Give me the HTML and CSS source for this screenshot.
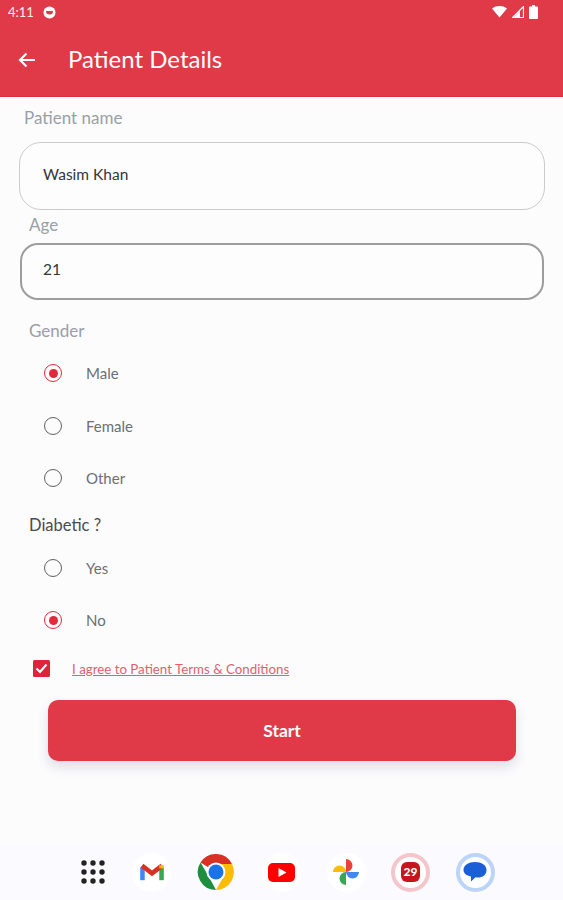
FILE: index.html
```html
<!DOCTYPE html>
<html lang="en">
<head>
    <meta charset="UTF-8">
    <meta name="viewport" content="width=device-width, initial-scale=1.0">
    <title>Patient Details</title>
    <link rel="stylesheet" href="styles.css">
</head>
<body>
    <div class="screen">
        <header class="appbar">
            <div class="statusbar">
                <span class="clock">4:11</span>
                <svg class="status-dot" width="13" height="13" viewBox="0 0 13 13"><circle cx="6.5" cy="6.5" r="6" fill="#fff"/><path d="M3 5h7a3.5 3.5 0 0 1-7 0z" fill="#e03a48"/></svg>
                <span class="status-right">
                    <svg width="15" height="12" viewBox="0 0 15 12"><path d="M0 2.5C4 -.8 11 -.8 15 2.5L7.500 11.500z" fill="#fff"/></svg>
                    <svg width="12" height="12" viewBox="0 0 12 12"><path d="M11.500 .5V11.500H.5z" fill="none" stroke="#fff" stroke-width="1.200"/><path d="M8 4.500V11.500H1.500z" fill="#fff"/></svg>
                    <svg width="9" height="14" viewBox="0 0 9 14"><path d="M3 0h3v1.500h2a1 1 0 0 1 1 1V13a1 1 0 0 1-1 1H1a1 1 0 0 1-1-1V2.500a1 1 0 0 1 1-1h2z" fill="#fff"/></svg>
                </span>
            </div>
            <div class="toolbar">
                <svg class="back" width="18" height="16" viewBox="0 0 18 16"><path d="M17 8H2M8.500 1.500 2 8l6.500 6.500" fill="none" stroke="#fff" stroke-width="2.200"/></svg>
                <h1>Patient Details</h1>
            </div>
        </header>

        <main class="form">
            <div class="field-label first">Patient name</div>
            <div class="input input-name">Wasim Khan</div>
            <div class="field-label age">Age</div>
            <div class="input input-age">21</div>

            <div class="field-label gender">Gender</div>
            <div class="option"><span class="radio on"></span>Male</div>
            <div class="option"><span class="radio"></span>Female</div>
            <div class="option"><span class="radio"></span>Other</div>

            <div class="field-label diabetic">Diabetic ?</div>
            <div class="option"><span class="radio"></span>Yes</div>
            <div class="option"><span class="radio on"></span>No</div>

            <div class="terms">
                <span class="checkbox">
                    <svg width="13" height="11" viewBox="0 0 13 11"><path d="M1.500 5.500 5 9l6.500-7.500" fill="none" stroke="#fff" stroke-width="2.200"/></svg>
                </span>
                <a href="#">I agree to Patient Terms &amp; Conditions</a>
            </div>

            <button class="start">Start</button>
        </main>

        <nav class="dock">
            <span class="dock-item grid-icon">
                <svg width="24" height="24" viewBox="0 0 24 24" fill="#222"><circle cx="3" cy="3" r="2.700"/><circle cx="12" cy="3" r="2.700"/><circle cx="21" cy="3" r="2.700"/><circle cx="3" cy="12" r="2.700"/><circle cx="12" cy="12" r="2.700"/><circle cx="21" cy="12" r="2.700"/><circle cx="3" cy="21" r="2.700"/><circle cx="12" cy="21" r="2.700"/><circle cx="21" cy="21" r="2.700"/></svg>
            </span>
            <span class="dock-item app">
                <svg width="26" height="20" viewBox="0 0 28 22" fill="none">
                    <path d="M3.500 20V6" stroke="#4285f4" stroke-width="5"/>
                    <path d="M24.500 20V6" stroke="#34a853" stroke-width="5"/>
                    <path d="M3 4l11 8.500L25 4" stroke="#d93025" stroke-width="5"/>
                    <path d="M24.500 7V3.500" stroke="#fbbc04" stroke-width="5"/>
                </svg>
            </span>
            <span class="dock-item chrome">
                <svg width="38" height="38" viewBox="0 0 38 38">
                    <path d="M19 19 3.500 9.500A18 18 0 0 1 35 11H19z" fill="#d93025"/>
                    <path d="M19 37A18 18 0 0 1 3.500 9.500L12 24z" fill="#1e8e3e"/>
                    <path d="M19 37 27 23 19 11h16A18 18 0 0 1 19 37z" fill="#fbbc04"/>
                    <circle cx="19" cy="19" r="9.500" fill="#fff"/>
                    <circle cx="19" cy="19" r="7.500" fill="#1a73e8"/>
                </svg>
            </span>
            <span class="dock-item app">
                <svg width="27" height="19" viewBox="0 0 27 19"><rect width="27" height="19" rx="5" fill="#f00"/><path d="M10.500 5v9l8-4.500z" fill="#fff"/></svg>
            </span>
            <span class="dock-item app">
                <svg width="28" height="28" viewBox="0 0 28 28">
                    <path d="M14 14H1a6.500 6.500 0 0 1 13 0z" fill="#fbbc04"/>
                    <path d="M14 14V1a6.500 6.500 0 0 1 0 13z" fill="#ea4335"/>
                    <path d="M14 14h13a6.500 6.500 0 0 1-13 0z" fill="#4285f4"/>
                    <path d="M14 14v13a6.500 6.500 0 0 1 0-13z" fill="#34a853"/>
                </svg>
            </span>
            <span class="dock-item ring ring-red">
                <span class="calendar">29</span>
            </span>
            <span class="dock-item ring ring-blue">
                <svg width="24" height="22" viewBox="0 0 24 22"><path d="M12 1c6.500 0 11.500 3 11.500 8s-4 7.500-8.500 7.500c-1 0-2 0-2.500-.2L8 20.500V15.500C3.500 14.500.5 12.500.5 9 .5 4 5.500 1 12 1z" fill="#1a5fd6"/></svg>
            </span>
        </nav>
    </div>
</body>
</html>
```
FILE: styles.css
```css
html, body { margin: 0; padding: 0; }
body { font-family: 'Lato', 'Noto Sans', sans-serif; background-color: #fcfcfd; }
.screen { width: 563px; height: 900px; display: flex; flex-direction: column; overflow: hidden; }

.appbar { height: 96px; background: #e03a48; border-bottom: 1px solid #d92f3e; color: white; }
.statusbar { height: 24px; display: flex; align-items: center; padding: 0 25px 0 8px; font-size: 13px; }
.clock { opacity: 0.9; }
.status-dot { margin-left: 9px; }
.status-right { margin-left: auto; display: flex; align-items: center; gap: 5px; }
.toolbar { height: 72px; display: flex; align-items: center; padding-left: 18px; }
.toolbar h1 { margin: 0 0 3px 32px; font-size: 24px; font-weight: 400; }
.back { flex: none; }

.form { flex: 1; }
.field-label { color: #9a9fa6; font-size: 17px; line-height: 20px; padding-left: 29px; }
.field-label.first { padding-left: 24px; margin-top: 11px; }
.field-label.age { margin-top: 5px; }
.field-label.gender { margin: 21px 0 6px; }
.field-label.diabetic { color: #4a4a4f; font-size: 16.500px; margin: 10px 0 7px; }

.input { display: flex; align-items: center; box-sizing: border-box; padding: 0 0 5px 23px; color: #33353a; font-size: 15.500px; background: #fdfdfd; }
.input-name { margin: 14px 18px 0 19px; height: 68px; border: 1.500px solid #c9cccb; border-radius: 22px; }
.input-age { margin: 8px 19px 0 20px; height: 57px; border: 2px solid #9c9d9e; border-radius: 18px; padding-left: 21px; }

.option { height: 52.500px; display: flex; align-items: center; color: #6c6f74; font-size: 15px; padding-left: 44px; }
.radio { width: 16px; height: 16px; border: 1.800px solid #5f6164; border-radius: 50%; margin-right: 24px; position: relative; flex: none; }
.radio.on { border-color: #e5293d; }
.radio.on::after { content: ""; position: absolute; left: 3.500px; top: 3.500px; width: 9px; height: 9px; border-radius: 50%; background: #e5293d; }

.terms { display: flex; align-items: center; padding-left: 33px; margin-top: 8px; height: 28px; }
.checkbox { width: 17px; height: 17px; background: #e0233a; border-radius: 1.500px; display: flex; align-items: center; justify-content: center; margin-right: 22px; }
.terms a { color: #e2606e; font-size: 13.300px; text-decoration: underline; }

.start { display: block; margin: 17px 47px 0 48px; width: 468px; height: 61px; background: #e03a48; border: none; border-radius: 10px; color: white; font-family: inherit; font-size: 17.500px; font-weight: 700; box-shadow: 0 6px 12px rgba(60, 70, 110, 0.16); }

.dock { height: 56px; display: flex; align-items: center; padding-left: 73px; background: #fbfafe; }
.dock-item { width: 39px; height: 39px; display: flex; align-items: center; justify-content: center; flex: none; margin-right: 25.500px; }
.grid-icon { margin-right: 20px; }
.chrome { margin-right: 26.500px; }
.app { background: white; border-radius: 50%; box-sizing: border-box; }
.ring { border-radius: 50%; box-sizing: border-box; background: white; }
.ring-red { border: 4px solid #f3c6cb; }
.ring-blue { border: 4px solid #bcd4f6; margin-right: 0; }
.calendar { background: #c5161d; color: white; font-size: 12px; font-weight: 900; border-radius: 6px; padding: 2px 3px; line-height: 16px; }
```
